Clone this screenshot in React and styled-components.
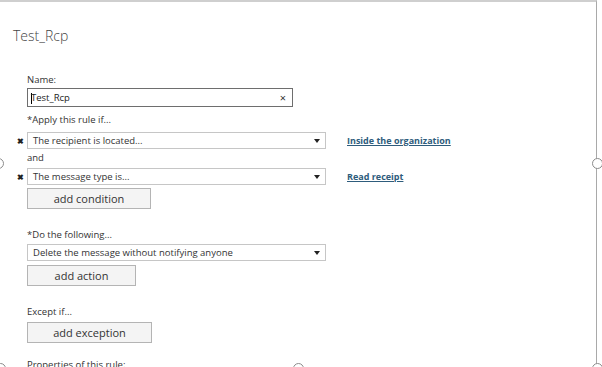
import React from "react";
import styled, { createGlobalStyle } from "styled-components";

const GlobalStyle = createGlobalStyle`
  html, body {
    margin: 0;
    padding: 0;
    background: #ffffff;
    overflow: hidden;
  }
  body {
    font-family: "Open Sans", "Noto Sans", sans-serif;
    color: #333333;
  }
`;

// cadre de la fenêtre

const Frame = styled.div`
  position: relative;
  width: 597px;
  height: 367px;
  border-top: 2px solid #cfcfcf;
  border-right: 1px solid #a9a9a9;
  box-sizing: border-box;
  overflow: visible;
`;

const Handle = styled.span`
  position: absolute;
  left: ${(p) => p.x}px;
  top: ${(p) => p.y}px;
  width: 9px;
  height: 9px;
  border: 1px solid #8c8c8c;
  border-radius: 50%;
  background: #ffffff;
`;

const Title = styled.h1`
  margin: 0;
  padding: 24px 0 0 13px;
  font-size: 14px;
  font-weight: 300;
  line-height: 20px;
  color: #444444;
`;

const Form = styled.div`
  padding: 27px 0 0 27px;
  display: flex;
  flex-direction: column;
`;

const Label = styled.div`
  font-size: 9.5px;
  line-height: 14px;
  color: #333333;
  margin-top: ${(p) => p.mt || 0}px;
`;

const TextInput = styled.div`
  display: flex;
  align-items: center;
  justify-content: space-between;
  width: 266px;
  height: 19px;
  box-sizing: border-box;
  border: 1px solid #6e6e6e;
  padding: 0 6px 0 3px;
  margin-top: 1px;
  font-size: 9.5px;
  color: #222222;
`;

const Caret = styled.span`
  display: inline-block;
  width: 1px;
  height: 11px;
  background: #000000;
  margin-right: -1px;
  vertical-align: middle;
`;

const Clear = styled.span`
  font-size: 11px;
  color: #333333;
`;

const CondRow = styled.div`
  display: flex;
  align-items: center;
  margin-left: -13px;
  margin-top: ${(p) => p.mt || 0}px;
`;

const Remove = styled.span`
  width: 10px;
  padding-left: 3px;
  font-size: 8px;
  font-weight: 700;
  color: #222222;
  line-height: 1;
`;

const Select = styled.div`
  display: flex;
  align-items: center;
  justify-content: space-between;
  width: 299px;
  height: 17px;
  box-sizing: border-box;
  border: 1px solid #c6c6c6;
  padding: 0 5px 0 5px;
  font-size: 9.5px;
  color: #333333;
  background: #ffffff;
  margin-top: ${(p) => p.mt || 0}px;
`;

const Arrow = styled.span`
  width: 0;
  height: 0;
  border-left: 3px solid transparent;
  border-right: 3px solid transparent;
  border-top: 4px solid #222222;
`;

const Link = styled.a`
  margin-left: 21px;
  font-size: 9px;
  font-weight: 700;
  color: #2e5c7c;
  text-decoration: underline;
`;

const Button = styled.div`
  display: flex;
  align-items: center;
  justify-content: center;
  width: ${(p) => p.w}px;
  height: 21px;
  box-sizing: border-box;
  border: 1px solid #b4b4b4;
  background: #f4f4f4;
  font-size: 11px;
  color: #333333;
  margin-top: ${(p) => p.mt || 0}px;
`;

function App() {
  return (
    <>
      <GlobalStyle />
      <Frame>
        <Title>Test_Rcp</Title>
        <Form>
          <Label>Name:</Label>
          <TextInput>
            <span>
              <Caret />
              Test_Rcp
            </span>
            <Clear>×</Clear>
          </TextInput>
          <Label mt={6}>*Apply this rule if...</Label>
          <CondRow mt={5}>
            <Remove>✖</Remove>
            <Select>
              The recipient is located...
              <Arrow />
            </Select>
            <Link>Inside the organization</Link>
          </CondRow>
          <Label mt={2}>and</Label>
          <CondRow mt={3}>
            <Remove>✖</Remove>
            <Select>
              The message type is...
              <Arrow />
            </Select>
            <Link>Read receipt</Link>
          </CondRow>
          <Button w={124} mt={3}>
            add condition
          </Button>
          <Label mt={19}>*Do the following...</Label>
          <Select mt={2}>
            Delete the message without notifying anyone
            <Arrow />
          </Select>
          <Button w={109} mt={4}>
            add action
          </Button>
          <Label mt={19}>Except if...</Label>
          <Button w={125} mt={3}>
            add exception
          </Button>
          <Label mt={15}>Properties of this rule:</Label>
        </Form>
        <Handle x={-7} y={156} />
        <Handle x={592} y={156} />
        <Handle x={-5} y={361} />
        <Handle x={293} y={361} />
        <Handle x={592} y={361} />
      </Frame>
    </>
  );
}

export default App;
